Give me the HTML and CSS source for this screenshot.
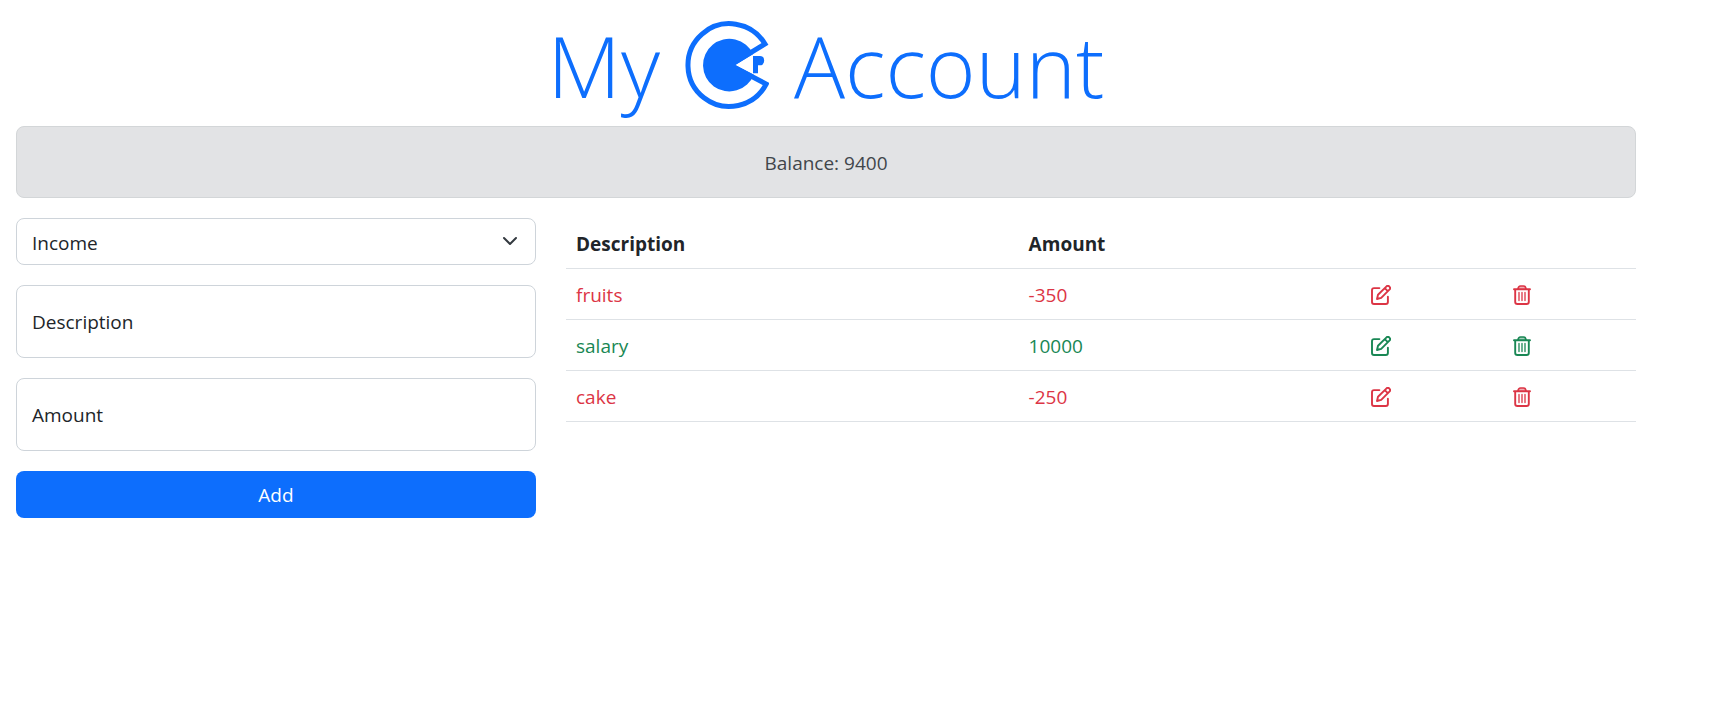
FILE: index.html
```html
<!DOCTYPE html>
<html lang="en">
<head>
<meta charset="utf-8">
<title>My Account</title>
<link rel="stylesheet" href="styles.css">
</head>
<body>
<svg class="sprite" aria-hidden="true">
  <symbol id="edit" viewBox="0 0 20 20">
    <g fill="none" stroke="currentColor" stroke-width="1.9" stroke-linecap="round" stroke-linejoin="round">
      <path d="M8.4 3.1H3Q1 3.1 1 5.2V17Q1 19 3 19H14.8Q16.9 19 16.9 17V11.8"/>
      <path d="M6 14L7 9.8L15.3 1.6A2.1 2.1 0 0 1 18.4 4.7L10.2 12.9ZM13.8 3.2L16.8 6.2"/>
    </g>
  </symbol>
  <symbol id="trash" viewBox="0 0 20 20">
    <g fill="none" stroke="currentColor" stroke-linecap="round">
      <path stroke-width="1.9" d="M2 4.200H18M3.200 4.200V17Q3.200 19 5.400 19H14.600Q16.800 19 16.800 17V4.200"/>
      <path stroke-width="1.7" fill="currentColor" fill-opacity=".4" d="M6 4Q6.400 1 8.500 1H11.500Q13.600 1 14 4"/>
      <path stroke-width="1.300" d="M7 7.500V15.500M10 7.500V15.500M13 7.500V15.500"/>
    </g>
  </symbol>
</svg>
<main class="page">
  <h1 class="title">
    <span>My</span>
    <svg class="logo" viewBox="7 10 84 90" role="img" aria-label="CP">
      <path fill="none" stroke="currentColor" stroke-width="5" d="M52.200 55.200L87 34A41.400 41.400 0 1 0 88.200 74Z"/>
      <path fill="currentColor" d="M57.300 55L75.200 44.100A26.300 26.300 0 1 0 75.800 64.700Z"/>
      <path fill="currentColor" d="M75 46H82Q86.200 46 86.200 50.600T82 55.200H80V63.200H75Z"/>
    </svg>
    <span>Account</span>
  </h1>
  <div class="balance" role="status">Balance: 9400</div>
  <div class="columns">
    <form class="entry">
      <div class="field">
        <select class="control select" aria-label="Type">
          <option>Income</option>
          <option>Expense</option>
        </select>
        <svg class="chevron" viewBox="0 0 16 16" aria-hidden="true"><path fill="none" stroke="#343a40" stroke-width="2" stroke-linecap="round" stroke-linejoin="round" d="m2 5 6 6 6-6"/></svg>
      </div>
      <div class="field">
        <input class="control tall" id="description" type="text">
        <label class="label" for="description">Description</label>
      </div>
      <div class="field">
        <input class="control tall" id="amount" type="text">
        <label class="label" for="amount">Amount</label>
      </div>
      <button class="add" type="button">Add</button>
    </form>
    <table class="records">
      <colgroup><col class="c-desc"><col class="c-amount"><col class="c-edit"><col class="c-delete"></colgroup>
      <thead>
        <tr><th>Description</th><th>Amount</th><th></th><th></th></tr>
      </thead>
      <tbody>
        <tr class="expense"><td>fruits</td><td>-350</td>
          <td><button class="icon" type="button" aria-label="Edit"><svg><use href="#edit"/></svg></button></td>
          <td><button class="icon" type="button" aria-label="Delete"><svg><use href="#trash"/></svg></button></td></tr>
        <tr class="income"><td>salary</td><td>10000</td>
          <td><button class="icon" type="button" aria-label="Edit"><svg><use href="#edit"/></svg></button></td>
          <td><button class="icon" type="button" aria-label="Delete"><svg><use href="#trash"/></svg></button></td></tr>
        <tr class="expense"><td>cake</td><td>-250</td>
          <td><button class="icon" type="button" aria-label="Edit"><svg><use href="#edit"/></svg></button></td>
          <td><button class="icon" type="button" aria-label="Delete"><svg><use href="#trash"/></svg></button></td></tr>
      </tbody>
    </table>
  </div>
</main>
</body>
</html>
```
FILE: styles.css
```css
* { box-sizing: border-box; }

body {
  margin: 0;
  background: #fff;
  color: #212529;
  font: 19px/30px "Segoe UI", "Open Sans", "Noto Sans", sans-serif;
}

.sprite { position: absolute; width: 0; height: 0; }

.page { padding: 8px 79px 0 16px; }

.title {
  display: flex;
  justify-content: center;
  align-items: center;
  gap: 25px;
  margin: 0;
  padding-bottom: 4px;
  color: #0d6efd;
  font-size: 85px;
  font-weight: 300;
  line-height: 114px;
}

.logo { width: 84px; height: 90px; }

.balance {
  padding: 21px 20px 19px;
  border: 1px solid #d3d6d8;
  border-radius: 8px;
  background: #e2e3e5;
  color: #41464b;
  text-align: center;
}

.columns {
  display: grid;
  grid-template-columns: repeat(12, 1fr);
  column-gap: 30px;
  align-items: start;
  margin-top: 20px;
}

.entry {
  grid-column: span 4;
  display: flex;
  flex-direction: column;
  gap: 20px;
}

.field { position: relative; display: flex; }

.control {
  width: 100%;
  height: 47px;
  padding: 2px 15px 0;
  border: 1px solid #ced4da;
  border-radius: 8px;
  background: #fff;
  color: inherit;
  font: inherit;
}

.select { appearance: none; }
.tall { height: 73px; }

.chevron {
  position: absolute;
  top: 15px;
  right: 18px;
  width: 16px;
  height: 16px;
  pointer-events: none;
}

.label {
  position: absolute;
  top: 22px;
  left: 16px;
  pointer-events: none;
}

.add {
  height: 47px;
  border: 0;
  border-radius: 8px;
  background: #0d6efd;
  color: #fff;
  font: inherit;
}

.records {
  grid-column: span 8;
  width: 100%;
  border-collapse: separate;
  border-spacing: 0;
  table-layout: fixed;
}

.c-desc { width: 42.3%; }
.c-amount { width: 32%; }
.c-edit { width: 13.2%; }
.c-delete { width: 12.5%; }

.records th,
.records td {
  height: 51px;
  padding: 1px 10px 0;
  border-bottom: 1px solid #dee2e6;
  text-align: left;
}

.expense { color: #dc3545; }
.income { color: #198754; }

.icon {
  display: flex;
  padding: 0;
  border: 0;
  background: none;
  color: inherit;
}

.icon svg { width: 20px; height: 20px; }
```
